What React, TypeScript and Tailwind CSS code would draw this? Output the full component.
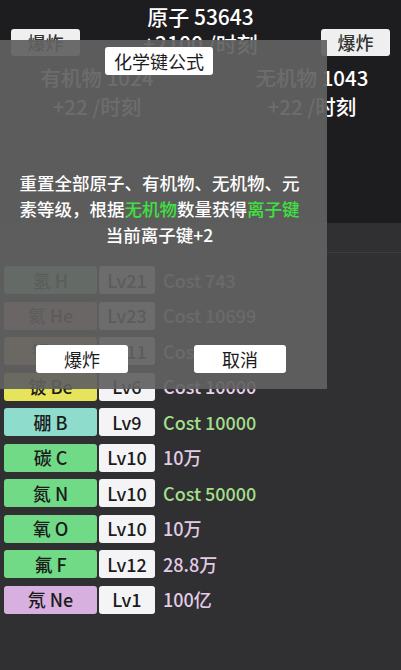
import React from 'react';

type Elem = { name: string; lv: string; cost: string; bg: string; costColor: string };

const elements: Elem[] = [
  { name: '氢 H', lv: 'Lv21', cost: 'Cost 743', bg: 'bg-[#8fe0a6]', costColor: 'text-[#e6d2ea]' },
  { name: '氦 He', lv: 'Lv23', cost: 'Cost 10699', bg: 'bg-[#f2a9a9]', costColor: 'text-[#e6d2ea]' },
  { name: '锂 Li', lv: 'Lv11', cost: 'Cost 3520', bg: 'bg-[#eec57a]', costColor: 'text-[#e6d2ea]' },
  { name: '铍 Be', lv: 'Lv6', cost: 'Cost 10000', bg: 'bg-[#e6e45a]', costColor: 'text-[#e6d2ea]' },
  { name: '硼 B', lv: 'Lv9', cost: 'Cost 10000', bg: 'bg-[#8edccb]', costColor: 'text-[#a3df8a]' },
  { name: '碳 C', lv: 'Lv10', cost: '10万', bg: 'bg-[#71da86]', costColor: 'text-[#e2cbe6]' },
  { name: '氮 N', lv: 'Lv10', cost: 'Cost 50000', bg: 'bg-[#71da86]', costColor: 'text-[#a3df8a]' },
  { name: '氧 O', lv: 'Lv10', cost: '10万', bg: 'bg-[#71da86]', costColor: 'text-[#e2cbe6]' },
  { name: '氟 F', lv: 'Lv12', cost: '28.8万', bg: 'bg-[#71da86]', costColor: 'text-[#e2cbe6]' },
  { name: '氖 Ne', lv: 'Lv1', cost: '100亿', bg: 'bg-[#d8b0e0]', costColor: 'text-[#e2cbe6]' },
];

function ElementRow({ e }: { e: Elem }) {
  return (
    <div className="flex items-center h-[28px] gap-[2px] font-medium">
      <div className={`${e.bg} w-[93px] h-full rounded-[3px] flex items-center justify-center text-[18px] text-[#1b1b1b]`}>
        {e.name}
      </div>
      <div className="bg-[#f4f4f6] w-[56px] h-full rounded-[3px] flex items-center justify-center text-[18px] text-[#1b1b1b]">
        {e.lv}
      </div>
      <div className={`ml-[6px] text-[18px] ${e.costColor}`}>{e.cost}</div>
    </div>
  );
}

export default function App() {
  return (
    <div className="relative w-[401px] h-[670px] overflow-hidden flex flex-col font-['Noto_Sans_CJK_SC','Noto_Sans',sans-serif] bg-[#302f32]">
      {/* top resources */}
      <div className="bg-[#1d1c1f] h-[223px] shrink-0 text-white font-medium">
        <div className="pt-[3px] text-center text-[21px] leading-[26px]">原子 53643</div>
        <div className="flex items-center justify-between px-[11px] h-[27px]">
          <button className="w-[69px] h-[27px] rounded-[3px] bg-[#efefef] text-[#333] text-[18px]">爆炸</button>
          <div className="text-[21px] leading-[26px]">+2100 /时刻</div>
          <button className="w-[69px] h-[27px] rounded-[3px] bg-[#efefef] text-[#333] text-[18px]">爆炸</button>
        </div>
        <div className="flex mt-[7px] text-[20.5px] leading-[29px]">
          <div className="w-[194px] flex flex-col items-center">
            <div>有机物 1024</div>
            <div>+22 /时刻</div>
          </div>
          <div className="ml-auto w-[178px] flex flex-col items-center">
            <div>无机物 1043</div>
            <div>+22 /时刻</div>
          </div>
        </div>
      </div>

      {/* element list */}
      <div className="flex-1">
        <div className="mt-[29px] h-px bg-[#3d3c40]" />
        <div className="mt-[13px] px-[4px] flex flex-col gap-[7.5px]">
          {elements.map((e) => (
            <ElementRow key={e.name} e={e} />
          ))}
        </div>
      </div>

      {/* dialog overlay */}
      <div className="absolute left-0 top-[40px] w-[327px] h-[349px] bg-[#616161]/[0.93] flex flex-col">
        <div className="ml-[105px] mt-[7px] w-[108px] h-[28px] bg-white rounded-[3px] flex items-center justify-center text-[18px] text-[#1b1b1b]">
          化学键公式
        </div>
        <div className="mt-[95px] pr-[8px] text-center text-white text-[17.5px] leading-[26px] font-medium">
          <div>重置全部原子、有机物、无机物、元</div>
          <div>
            素等级，根据<span className="text-[#3fe03f]">无机物</span>数量获得<span className="text-[#3fe03f]">离子键</span>
          </div>
          <div>当前离子键+2</div>
        </div>
        <div className="mt-auto mb-[16px] flex pl-[36px] gap-[66px]">
          <button className="w-[92px] h-[28px] bg-white rounded-[3px] text-[18px] text-[#1b1b1b]">爆炸</button>
          <button className="w-[92px] h-[28px] bg-white rounded-[3px] text-[18px] text-[#1b1b1b]">取消</button>
        </div>
      </div>
    </div>
  );
}
